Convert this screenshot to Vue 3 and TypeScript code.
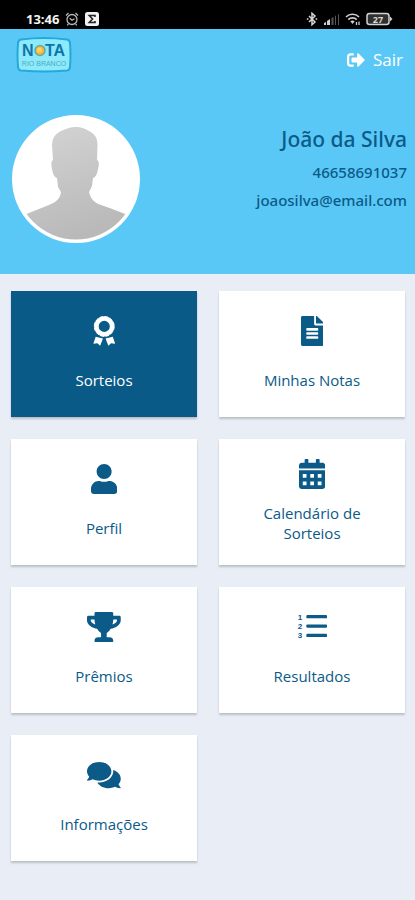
<script setup lang="ts">
interface MenuItem {
  id: string
  label: string
  width: number
  path?: string
  active?: boolean
  long?: boolean
}

const items: MenuItem[] = [
  { id: 'award', label: 'Sorteios', width: 384, active: true },
  {
    id: 'file',
    label: 'Minhas Notas',
    width: 384,
    path: 'M224 136V0H24C10.700 0 0 10.700 0 24v464c0 13.300 10.700 24 24 24h336c13.300 0 24-10.700 24-24V160H248c-13.200 0-24-10.800-24-24zm70 242c0 6.600-5.400 12-12 12H102c-6.600 0-12-5.400-12-12v-20c0-6.600 5.400-12 12-12h180c6.600 0 12 5.400 12 12v20zm0-70c0 6.600-5.400 12-12 12H102c-6.600 0-12-5.400-12-12v-20c0-6.600 5.400-12 12-12h180c6.600 0 12 5.400 12 12v20zm0-90v20c0 6.600-5.400 12-12 12H102c-6.600 0-12-5.400-12-12v-20c0-6.600 5.400-12 12-12h180c6.600 0 12 5.400 12 12zm90-96.100v6.100H256V0h6.100c6.400 0 12.500 2.500 17 7l97.900 98c4.500 4.500 7 10.600 7 16.900z',
  },
  {
    id: 'user',
    label: 'Perfil',
    width: 448,
    path: 'M224 256c70.700 0 128-57.300 128-128S294.700 0 224 0 96 57.300 96 128s57.300 128 128 128zm89.600 32h-16.700c-22.200 10.200-46.900 16-72.900 16s-50.600-5.800-72.900-16h-16.700C60.200 288 0 348.200 0 422.400V464c0 26.500 21.500 48 48 48h352c26.500 0 48-21.500 48-48v-41.600c0-74.200-60.200-134.400-134.400-134.400z',
  },
  {
    id: 'calendar',
    label: 'Calendário de Sorteios',
    width: 448,
    long: true,
    path: 'M400 64h-48V16c0-8.800-7.200-16-16-16h-32c-8.800 0-16 7.200-16 16v48H160V16c0-8.800-7.200-16-16-16h-32c-8.800 0-16 7.200-16 16v48H48C21.500 64 0 85.500 0 112v48h448v-48c0-26.500-21.500-48-48-48zM0 192v272c0 26.500 21.500 48 48 48h352c26.500 0 48-21.500 48-48V192zM64 256h64v64H64zM192 256h64v64h-64zM320 256h64v64h-64zM64 384h64v64H64zM192 384h64v64h-64zM320 384h64v64h-64z',
  },
  {
    id: 'trophy',
    label: 'Prêmios',
    width: 576,
    path: 'M552 64H448V24c0-13.300-10.700-24-24-24H152c-13.300 0-24 10.700-24 24v40H24C10.700 64 0 74.700 0 88v56c0 35.700 22.500 72.400 61.900 100.700 31.500 22.700 69.800 37.100 110 41.700C203.300 338.500 240 360 240 360v72h-48c-35.300 0-64 20.700-64 56v12c0 6.600 5.400 12 12 12h296c6.600 0 12-5.400 12-12v-12c0-35.300-28.700-56-64-56h-48v-72s36.700-21.500 68.100-73.600c40.300-4.600 78.600-19 110-41.700 39.300-28.300 61.900-65 61.900-100.700V88c0-13.300-10.700-24-24-24zM99.300 192.800C74.900 175.200 64 155.600 64 144v-16h64.200c1 32.600 5.800 61.200 12.800 86.200-15.100-5.200-29.200-12.400-41.700-21.400zM512 144c0 16.100-17.700 36.100-35.300 48.800-12.500 9-26.700 16.200-41.800 21.400 7-25 11.800-53.600 12.800-86.200H512v16z',
  },
  { id: 'list', label: 'Resultados', width: 512 },
  {
    id: 'comments',
    label: 'Informações',
    width: 576,
    path: 'M416 192c0-88.400-93.100-160-208-160S0 103.600 0 192c0 34.300 14.100 65.900 38 92-13.400 30.200-35.500 54.200-35.800 54.500-2.200 2.300-2.800 5.700-1.500 8.700S4.800 352 8 352c36.600 0 66.900-12.300 88.700-25 32.200 15.700 70.300 25 111.300 25 114.900 0 208-71.600 208-160zm122 220c23.900-26 38-57.700 38-92 0-66.900-53.500-124.200-129.300-148.100.9 6.600 1.300 13.300 1.300 20.100 0 105.900-107.700 192-240 192-10.800 0-21.300-.8-31.700-1.900C207.800 439.600 281.800 480 368 480c41 0 79.100-9.200 111.300-25 21.800 12.700 52.100 25 88.700 25 3.200 0 6.100-1.900 7.300-4.800 1.300-2.900.7-6.300-1.500-8.700-.3-.3-22.400-24.200-35.800-54.500z',
  },
]
</script>

<template>
  <div class="app">
    <div class="status">
      <div class="status-group">
        <span class="clock">13:46</span>
        <svg width="14" height="14" viewBox="0 0 14 14" fill="none" stroke="#b8b8b8" stroke-width="1.300">
          <circle cx="7" cy="7.500" r="5" />
          <path d="M1 3.500 3.500 1M13 3.500 10.500 1M4.700 6.300 7 8.300l2.500-1.500M3.300 12l-1 1.300M10.700 12l1 1.300" />
        </svg>
        <svg width="14" height="14" viewBox="0 0 14 14">
          <rect width="14" height="14" rx="2.500" fill="#f2f2f2" />
          <path d="M10 5V3.500H4.300L7.500 7l-3.200 3.500H10V9" fill="none" stroke="#222" stroke-width="1.600" />
        </svg>
      </div>
      <div class="status-group status-right">
        <svg width="12" height="14" viewBox="0 0 12 14" fill="none" stroke="#d6d6d6" stroke-width="1.500">
          <path d="M3 4l6 6-3 2.700V1.300L9 4l-6 6" />
          <path d="M.8 7h1.600M9.600 7h1.600" stroke-width="1.600" />
        </svg>
        <svg width="17" height="12" viewBox="0 0 17 12">
          <path d="M1 12v-2l2-1v3zM4 12V8l3-2v6z" fill="#d0d0d0" />
          <path d="M8.500 12V5l2-1v8zM12 12V3l1-.5V12zM15 12V1.500l1-.5v11z" fill="#555" />
        </svg>
        <svg width="16" height="14" viewBox="0 0 16 14" fill="none" stroke="#cfcfcf" stroke-width="1.600">
          <path d="M1 5c3.500-3.600 9.500-3.600 13 0M3.300 7.600c2.300-2.300 6.100-2.300 8.400 0" />
          <path d="M5.300 9.200 7.500 12l2.200-2.800c-1.300-1-3.100-1-4.400 0z" fill="#cfcfcf" stroke="none" />
          <path d="M11.500 10v3M14 9.500v3.500" stroke-width="1.300" />
        </svg>
        <svg width="27" height="14" viewBox="0 0 27 14">
          <rect x="1" y="1.500" width="22" height="11" rx="2.500" fill="#303030" stroke="#d2d2d2" stroke-width="1.500" />
          <path d="M24 4.500 26.500 7 24 9.500z" fill="#d2d2d2" />
          <text x="12" y="10.500" text-anchor="middle" class="battery">27</text>
        </svg>
      </div>
    </div>

    <header class="header">
      <div class="topbar">
        <svg class="logo" width="56" height="36" viewBox="0 0 56 36" role="img" aria-label="Nota Rio Branco">
          <path d="M5 2.500Q28-.5 51 2.500q3 .5 3 4 1 11.500 0 23 0 3.500-3 4-23 2-46 0-3-.5-3-4-1-11.500 0-23 0-3.500 3-4z" fill="#8deafa" stroke="#25a9dc" stroke-width="2" />
          <text x="6" y="19" class="logo-name">N</text>
          <text x="29" y="19" class="logo-name">TA</text>
          <circle cx="24" cy="13.500" r="5" fill="#f5b53a" stroke="#66a9a4" stroke-width="1.500" />
          <circle cx="23.500" cy="13" r="2.500" fill="#ffd268" />
          <text x="28" y="29" text-anchor="middle" class="logo-city">RIO BRANCO</text>
        </svg>
        <a href="#" class="logout">
          <svg width="18" height="18" viewBox="0 0 512 512" fill="currentColor">
            <path d="M497 273L329 441c-15 15-41 4.500-41-17v-96H152c-13.300 0-24-10.700-24-24v-96c0-13.300 10.700-24 24-24h136V88c0-21.400 25.900-32 41-17l168 168c9.300 9.400 9.300 24.600 0 34zM192 436v-40c0-6.600-5.400-12-12-12H96c-17.700 0-32-14.300-32-32V160c0-17.700 14.300-32 32-32h84c6.600 0 12-5.400 12-12V76c0-6.600-5.400-12-12-12H96c-53 0-96 43-96 96v192c0 53 43 96 96 96h84c6.600 0 12-5.400 12-12z" />
          </svg>
          <span>Sair</span>
        </a>
      </div>
      <div class="profile">
        <svg class="avatar" width="128" height="128" viewBox="0 0 128 128" aria-hidden="true">
          <defs>
            <linearGradient id="shade" x1="0" y1="0" x2="0.300" y2="1">
              <stop offset="0" stop-color="#d4d4d4" />
              <stop offset="1" stop-color="#b9b9b9" />
            </linearGradient>
            <clipPath id="disc"><circle cx="64" cy="64" r="60.500" /></clipPath>
          </defs>
          <circle cx="64" cy="64" r="64" fill="#fff" />
          <path clip-path="url(#disc)" fill="url(#shade)" d="M64 12c6 0 9 2 13 4 6 3 8.500 7 8.500 14l-.5 15c2.500 1 2 5 1 9-1 5-2 8-5 9l-1 8-3 6c2 8 6 11 12 13 11 4 20 7 29 11v27H10v-27c8-4 18-7 27-11 7-3 11-6 12-13l-3-5-1-9c-3-1-4-4-5-9s-1-8 1-9l-1-14c0-8 3-12 9-15 5-2 9-4 15-4z" />
        </svg>
        <div class="person">
          <h1>João da Silva</h1>
          <p>46658691037</p>
          <p>joaosilva@email.com</p>
        </div>
      </div>
    </header>

    <main class="grid">
      <button
        v-for="item in items"
        :key="item.id"
        type="button"
        class="card"
        :class="{ active: item.active, long: item.long }"
      >
        <svg class="icon" :viewBox="`0 0 ${item.width} 512`" fill="currentColor" aria-hidden="true">
          <path v-if="item.path" :d="item.path" fill-rule="evenodd" />
          <g v-else-if="item.id === 'award'">
            <circle cx="192" cy="178" r="134" fill="none" stroke="currentColor" stroke-width="78" />
            <circle cx="192" cy="178" r="170" fill="none" stroke="currentColor" stroke-width="16" stroke-dasharray="65 24" />
            <path d="M46 352 170 384 122 508 76 464 6 472zM338 352 214 384l48 124 46-44 70 8z" />
          </g>
          <g v-else>
            <rect x="160" y="52" width="352" height="56" rx="16" />
            <rect x="160" y="212" width="352" height="56" rx="16" />
            <rect x="160" y="372" width="352" height="56" rx="16" />
            <text x="50" y="130" text-anchor="middle" class="digit">1</text>
            <text x="50" y="290" text-anchor="middle" class="digit">2</text>
            <text x="50" y="450" text-anchor="middle" class="digit">3</text>
          </g>
        </svg>
        <span class="label">{{ item.label }}</span>
      </button>
    </main>
  </div>
</template>

<style>
body {
  margin: 0;
  background: #e9eef6;
}
</style>

<style scoped>
.app {
  min-height: 100vh;
  background: #e9eef6;
  color: #0b5a88;
  font-family: 'Open Sans', 'Noto Sans', sans-serif;
}

.status {
  display: flex;
  align-items: center;
  justify-content: space-between;
  box-sizing: border-box;
  height: 29px;
  padding: 8px 22px 0 26px;
  background: #000;
}

.status-group {
  display: flex;
  align-items: center;
  gap: 6px;
}

.status-right {
  gap: 5px;
}

.clock {
  color: #f4f4f4;
  font-size: 13px;
  font-weight: 700;
  line-height: 16px;
}

.battery {
  fill: #d8d8d8;
  font-size: 9px;
  font-weight: 700;
}

.header {
  box-sizing: border-box;
  min-height: 245px;
  padding: 8px 8px 31px 12px;
  background: #5ac8f6;
}

.topbar {
  display: flex;
  align-items: center;
  justify-content: space-between;
  padding: 0 4px;
}

.logo-name {
  fill: #0f74ae;
  font-family: 'Liberation Sans', sans-serif;
  font-size: 16px;
  font-weight: 700;
}

.logo-city {
  fill: #4fa9c4;
  font-family: 'Liberation Sans', sans-serif;
  font-size: 7px;
}

.logout {
  display: flex;
  align-items: center;
  gap: 8px;
  padding-top: 10px;
  color: #fff;
  font-size: 17px;
  line-height: 24px;
  text-decoration: none;
}

.profile {
  display: flex;
  align-items: flex-start;
  justify-content: space-between;
  margin-top: 42px;
}

.avatar {
  flex: none;
}

.person {
  padding-top: 9px;
  font-family: 'Noto Sans', 'Open Sans', sans-serif;
  text-align: right;
}

.person h1 {
  margin: 0 0 4px;
  font-size: 21px;
  font-weight: 500;
  line-height: 30px;
}

.person p {
  margin: 0;
  font-size: 15px;
  font-weight: 500;
  line-height: 28px;
}

.grid {
  display: grid;
  grid-template-columns: 1fr 1fr;
  gap: 22px;
  padding: 17px 10px 38px 11px;
}

.card {
  display: flex;
  flex-direction: column;
  align-items: center;
  justify-content: center;
  gap: 24px;
  box-sizing: border-box;
  min-height: 126px;
  margin: 0;
  padding: 0 32px 2px;
  border: 0;
  background: #fff;
  box-shadow: 0 2px 2px rgba(0, 0, 0, 0.2);
  color: #0b5a88;
  font: inherit;
}

.card.active {
  background: #0a5a88;
  color: #fff;
}

.card.long {
  gap: 14px;
}

.icon {
  display: block;
  height: 30px;
}

.digit {
  font-family: 'Liberation Sans', sans-serif;
  font-size: 138px;
  font-weight: 700;
}

.label {
  font-size: 15px;
  line-height: 20px;
  text-align: center;
}
</style>
